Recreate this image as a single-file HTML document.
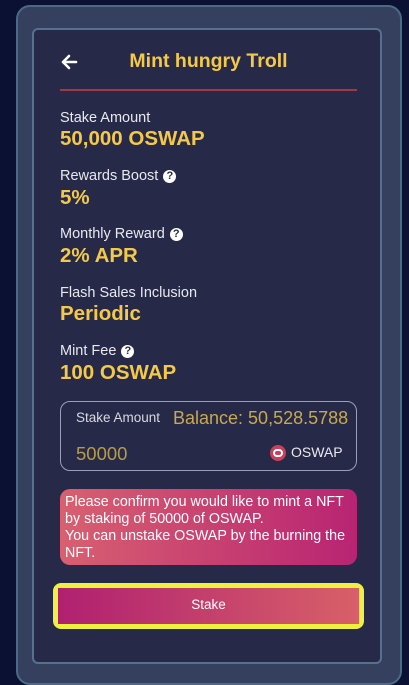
<!DOCTYPE html>
<html><head><style>
*{margin:0;padding:0;box-sizing:border-box}
body{width:409px;height:682px;background:#0b1133;font-family:"Liberation Sans",sans-serif;position:relative;overflow:hidden}
.frame{position:absolute;left:16px;top:5px;width:386px;height:680px;background:#35405f;border-radius:14px;border:2px solid #4a6a86}
.strip{position:absolute;left:32px;top:28px;width:350px;height:636px;border:2px solid #56708e;border-radius:6px;background:#262a48}
.panel{position:absolute;left:36px;top:32px;width:342px;height:628px;background:#262a48}
.t{position:absolute;color:#fff}
.lbl{position:absolute;left:60px;color:#e8e8ee;font-size:14.5px}
.val{position:absolute;left:60px;color:#f4c94a;font-size:20.5px;font-weight:bold}
.q{display:inline-block;width:13px;height:13px;border-radius:50%;background:#fff;color:#262a48;font-size:11px;font-weight:bold;text-align:center;line-height:13px;margin-left:5px;vertical-align:1px}
</style></head><body>
<div class="frame"></div>
<div class="strip"></div>
<div class="panel"></div>
<svg style="position:absolute;left:60px;top:54px" width="18" height="16" viewBox="0 0 18 16"><path d="M16 8H3M9 2L3 8l6 6" stroke="#fff" stroke-width="2.6" fill="none" stroke-linecap="round" stroke-linejoin="round"/></svg>
<div class="t" style="left:60px;width:297px;top:50px;text-align:center;color:#f4c94a;font-size:19.5px;font-weight:bold">Mint hungry Troll</div>
<div style="position:absolute;left:60px;top:89px;width:297px;height:2px;background:#a03848"></div>
<div class="lbl" style="top:110px">Stake Amount</div>
<div class="val" style="top:127px">50,000 OSWAP</div>
<div class="lbl" style="top:168px">Rewards Boost<span class="q">?</span></div>
<div class="val" style="top:186px">5%</div>
<div class="lbl" style="top:226px">Monthly Reward<span class="q">?</span></div>
<div class="val" style="top:244px">2% APR</div>
<div class="lbl" style="top:285px">Flash Sales Inclusion</div>
<div class="val" style="top:302px">Periodic</div>
<div class="lbl" style="top:343px">Mint Fee<span class="q">?</span></div>
<div class="val" style="top:361px">100 OSWAP</div>
<div style="position:absolute;left:60px;top:401px;width:297px;height:70px;border:1px solid #9aa0b8;border-radius:10px"></div>
<div class="t" style="left:76px;top:410px;font-size:13.5px;color:#d8d8e0">Stake Amount</div>
<div class="t" style="left:173px;top:408px;font-size:18px;color:#c8a850">Balance: 50,528.5788</div>
<div class="t" style="left:76px;top:443px;font-size:18.5px;color:#b89a48">50000</div>
<div style="position:absolute;left:270px;top:445px;width:16px;height:16px;border-radius:50%;background:#c8405a"></div>
<div class="t" style="left:273px;top:449px;width:10px;height:8px;border:2px solid #fff;border-radius:4px"></div>
<div class="t" style="left:291px;top:444px;font-size:14px;color:#e8e8ee">OSWAP</div>
<div style="position:absolute;left:60px;top:489px;width:297px;height:76px;border-radius:10px;background:linear-gradient(90deg,#d86070,#b82472);color:#fff;font-size:14.3px;line-height:17px;padding:5px 4px 0 5px">Please confirm you would like to mint a NFT by staking of 50000 of OSWAP.<br>You can unstake OSWAP by the burning the NFT.</div>
<div style="position:absolute;left:53px;top:583px;width:311px;height:46px;border:3px solid #eef23c;border-radius:8px;background:#eef23c;padding:2px">
<div style="width:100%;height:100%;background:linear-gradient(90deg,#b02070,#d86068);color:#fff;font-size:13.5px;text-align:center;line-height:34px">Stake</div></div>
</body></html>
